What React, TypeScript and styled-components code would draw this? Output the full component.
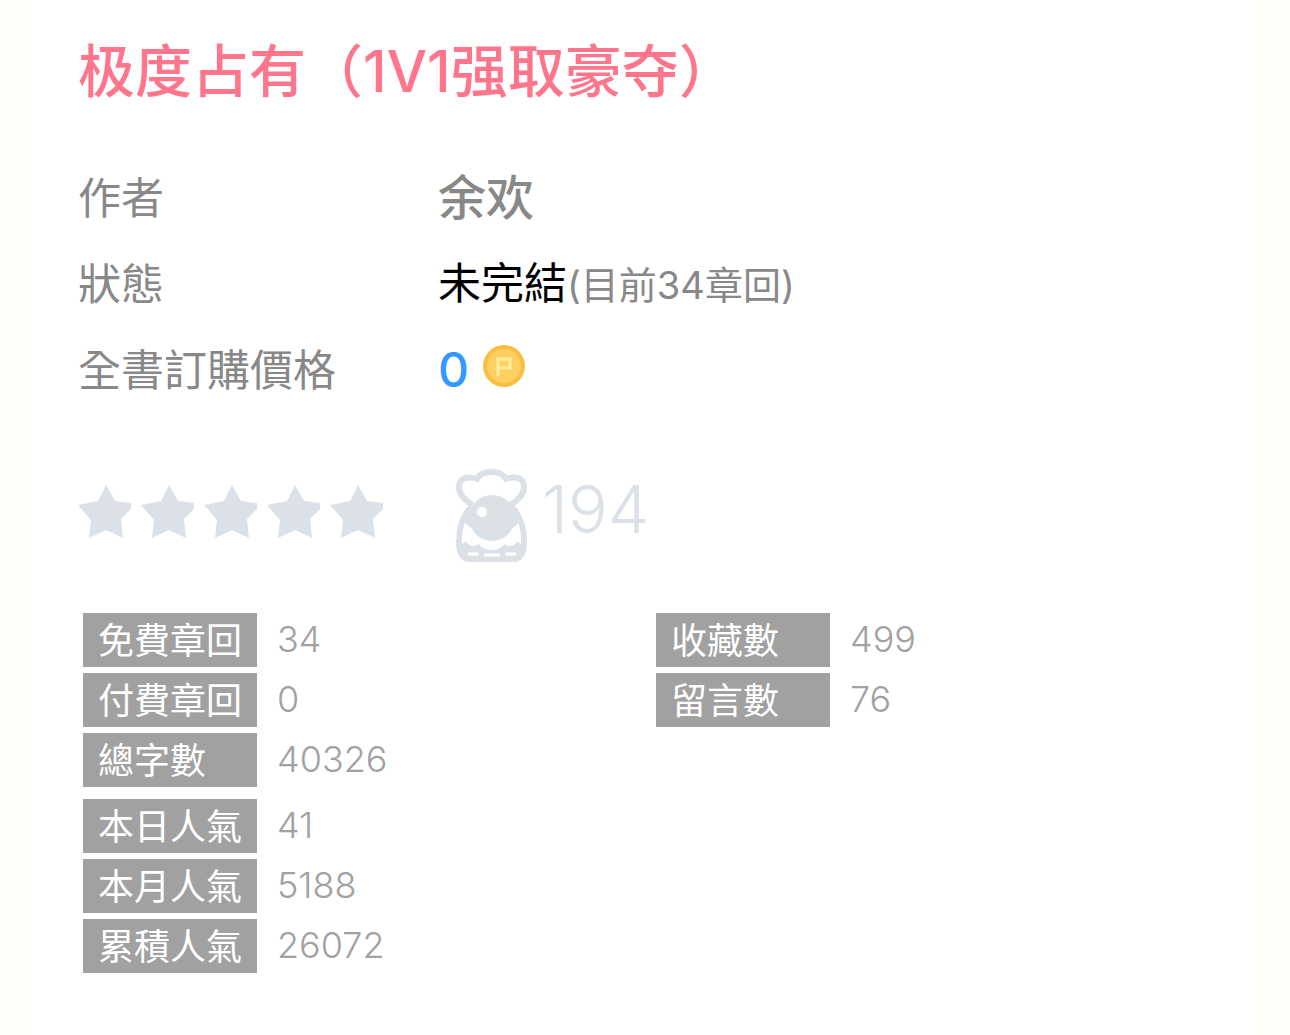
import React from "react";
import styled, { createGlobalStyle } from "styled-components";

const GlobalStyle = createGlobalStyle`
  *, *::before, *::after { box-sizing: border-box; }
  body {
    margin: 0;
    background: #fffdf8;
    font-family: Inter, "Noto Sans CJK TC", sans-serif;
    color: #888888;
  }
  h1, dl, dd, dt, p { margin: 0; }
`;

const Panel = styled.main`
  min-height: 100vh;
  margin: 0 32px;
  padding: 36px 29px 60px 46px;
  background: #ffffff;
`;

const Title = styled.h1`
  font-family: Inter, "Noto Sans CJK SC", sans-serif;
  font-size: 57px;
  line-height: 72px;
  font-weight: 500;
  color: #ff768c;
`;

const MetaList = styled.dl`
  margin-top: 47px;
`;

const MetaRow = styled.div`
  display: grid;
  grid-template-columns: 360px 1fr;
  align-items: center;
  height: 86px;
  font-size: 43px;
  line-height: 60px;
`;

const MetaValue = styled.dd`
  display: flex;
  align-items: baseline;
  padding-bottom: 1px;
`;

const Author = styled.span`
  font-family: Inter, "Noto Sans CJK SC", sans-serif;
  font-size: 48px;
  font-weight: 500;
`;

const Status = styled.span`
  color: #000000;
`;

const Note = styled.span`
  font-size: 38px;
`;

const Price = styled.span`
  font-size: 48px;
  font-weight: 500;
  color: #3399ff;
`;

const Coin = styled.svg`
  width: 42px;
  height: 42px;
  margin-left: 14px;
`;

const Rating = styled.div`
  display: flex;
  align-items: center;
  height: 94px;
  margin-top: 55px;
  color: #dce1e8;
`;

const Stars = styled.div`
  display: flex;
  gap: 10px;
  padding-bottom: 8px;
`;

const Star = styled.svg`
  width: 53px;
  height: 53px;
`;

const Mascot = styled.svg`
  width: 72px;
  height: 94px;
  margin-left: 72px;
`;

const Likes = styled.p`
  margin-left: 15px;
  padding-bottom: 12px;
  font-size: 66px;
  line-height: 80px;
  font-weight: 300;
`;

const Stats = styled.div`
  display: grid;
  grid-template-columns: 1fr 1fr;
  margin-top: 51px;
  padding-left: 5px;
`;

const StatColumn = styled.div`
  display: flex;
  flex-direction: column;
  gap: 12px;
`;

const StatList = styled.dl`
  display: flex;
  flex-direction: column;
  gap: 6px;
`;

const StatRow = styled.div`
  display: flex;
  gap: 20px;
  height: 54px;
  font-size: 36px;
  color: #a1a1a1;
`;

const StatLabel = styled.dt`
  width: 174px;
  padding-left: 15px;
  line-height: 56px;
  background: #a1a1a1;
  color: #ffffff;
`;

const StatValue = styled.dd`
  line-height: 52px;
  font-weight: 350;
`;

type Stat = [string, string];

const chapterStats: Stat[] = [["免費章回", "34"], ["付費章回", "0"], ["總字數", "40326"]];
const popularityStats: Stat[] = [["本日人氣", "41"], ["本月人氣", "5188"], ["累積人氣", "26072"]];
const readerStats: Stat[] = [["收藏數", "499"], ["留言數", "76"]];

function StatGroup({ items }: { items: Stat[] }) {
  return (
    <StatList>
      {items.map(([label, value]) => (
        <StatRow key={label}>
          <StatLabel>{label}</StatLabel>
          <StatValue>{value}</StatValue>
        </StatRow>
      ))}
    </StatList>
  );
}

function CoinIcon() {
  return (
    <Coin viewBox="0 0 42 42" aria-hidden="true">
      <circle cx="21" cy="21" r="21" fill="#f8bf3f" />
      <circle cx="21" cy="21" r="17" fill="#ffd061" />
      <path d="M15 31V14H27V23H17" fill="none" stroke="#ffec9c" strokeWidth="3" />
    </Coin>
  );
}

function StarIcon() {
  return (
    <Star viewBox="0 0 53 53" aria-hidden="true">
      <path d="M28 0L37 16L53 18V24L43 34L45 53L28 45L11 53L13 35L0 20L20 16Z" fill="currentColor" />
    </Star>
  );
}

function MascotIcon() {
  return (
    <Mascot viewBox="0 0 72 94" fill="none" stroke="currentColor" strokeWidth="6" aria-hidden="true">
      <path d="M18 37C10 33 4 26 4 19C4 9 14 8 22 11C25 5 31 4 37 4C43 4 48 6 51 11C60 8 69 9 69 19C69 26 63 33 55 37" />
      <path d="M17 38C8 47 4 60 4 74C4 85 8 91 14 91H59C65 91 69 85 69 74C69 60 65 47 56 38" />
      <path d="M4 76C7 76 10 75 11 73C13 79 20 79 24 76C28 84 45 84 49 76C53 79 60 79 62 73C63 75 66 76 69 76V82L60 92H13L4 82Z" fill="currentColor" stroke="none" />
      <path d="M14 86H22M30 87H44M52 86H60" stroke="#ffffff" strokeWidth="3" strokeLinecap="round" />
      <path d="M7 66C9 58 11 50 14 42L22 62ZM66 66C64 58 62 50 59 42L52 62Z" fill="#ffffff" stroke="none" />
      <path d="M15 38L9 54L16 60ZM58 38L65 54L58 60Z" fill="currentColor" stroke="none" />
      <circle cx="37" cy="50" r="23" fill="currentColor" stroke="none" />
      <circle cx="27" cy="44" r="5" fill="#ffffff" stroke="none" />
    </Mascot>
  );
}

export default function App() {
  return (
    <>
      <GlobalStyle />
      <Panel>
        <Title lang="zh-Hans">极度占有（1V1强取豪夺）</Title>
        <MetaList>
          <MetaRow>
            <dt>作者</dt>
            <MetaValue><Author lang="zh-Hans">余欢</Author></MetaValue>
          </MetaRow>
          <MetaRow>
            <dt>狀態</dt>
            <MetaValue><Status>未完結</Status><Note>(目前34章回)</Note></MetaValue>
          </MetaRow>
          <MetaRow>
            <dt>全書訂購價格</dt>
            <MetaValue><Price>0</Price><CoinIcon /></MetaValue>
          </MetaRow>
        </MetaList>
        <Rating>
          <Stars role="img" aria-label="0 / 5">
            {[1, 2, 3, 4, 5].map((n) => <StarIcon key={n} />)}
          </Stars>
          <MascotIcon />
          <Likes>194</Likes>
        </Rating>
        <Stats>
          <StatColumn>
            <StatGroup items={chapterStats} />
            <StatGroup items={popularityStats} />
          </StatColumn>
          <StatColumn>
            <StatGroup items={readerStats} />
          </StatColumn>
        </Stats>
      </Panel>
    </>
  );
}
